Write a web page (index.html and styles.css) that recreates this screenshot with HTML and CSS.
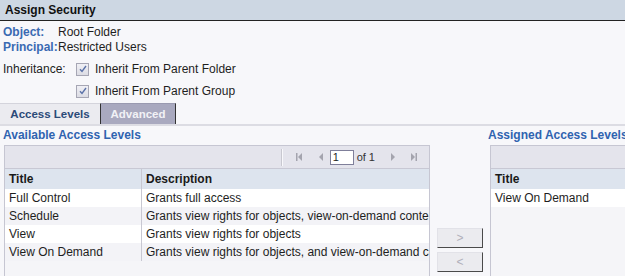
FILE: index.html
```html
<!DOCTYPE html>
<html lang="en">
<head>
<meta charset="UTF-8">
<title>Assign Security</title>
<link rel="stylesheet" href="styles.css">
</head>
<body>
  <div class="title-bar">Assign Security</div>

  <div class="info">
    <div class="info-row"><span class="label">Object:</span><span>Root Folder</span></div>
    <div class="info-row"><span class="label">Principal:</span><span>Restricted Users</span></div>
    <div class="check-row first">
      <span class="inherit">Inheritance:</span>
      <span class="check"><svg width="10" height="10" viewBox="0 0 10 10"><path d="M2 5.2 L4 7.5 L8 2" fill="none" stroke="#5b72a8" stroke-width="1.4"/></svg></span>
      <span>Inherit From Parent Folder</span>
    </div>
    <div class="check-row">
      <span class="inherit"></span>
      <span class="check"><svg width="10" height="10" viewBox="0 0 10 10"><path d="M2 5.2 L4 7.5 L8 2" fill="none" stroke="#5b72a8" stroke-width="1.4"/></svg></span>
      <span>Inherit From Parent Group</span>
    </div>
  </div>

  <div class="tabs">
    <div class="tab active">Access Levels</div>
    <div class="tab">Advanced</div>
  </div>

  <div class="panels">
    <div class="panel-left">
      <div class="panel-title">Available Access Levels</div>
      <div class="grid">
        <div class="toolbar">
          <span class="sep"></span>
          <svg class="pg" width="8" height="10" viewBox="0 0 8 10"><rect x="1" y="1" width="1.5" height="8" fill="#a4a4ae"/><path d="M7 1 L3 5 L7 9 Z" fill="#a4a4ae"/></svg>
          <svg class="pg prev" width="6" height="10" viewBox="0 0 6 10"><path d="M5 1 L1 5 L5 9 Z" fill="#a4a4ae"/></svg>
          <span class="page-box">1</span>
          <span class="of">of 1</span>
          <svg class="pg next" width="6" height="10" viewBox="0 0 6 10"><path d="M1 1 L5 5 L1 9 Z" fill="#a4a4ae"/></svg>
          <svg class="pg last" width="8" height="10" viewBox="0 0 8 10"><path d="M1 1 L5 5 L1 9 Z" fill="#a4a4ae"/><rect x="5.5" y="1" width="1.5" height="8" fill="#a4a4ae"/></svg>
        </div>
        <table class="levels">
          <tr><th class="col-title">Title</th><th>Description</th></tr>
          <tr><td class="col-title">Full Control</td><td>Grants full access</td></tr>
          <tr class="alt"><td class="col-title">Schedule</td><td>Grants view rights for objects, view-on-demand content</td></tr>
          <tr><td class="col-title">View</td><td>Grants view rights for objects</td></tr>
          <tr class="alt"><td class="col-title">View On Demand</td><td>Grants view rights for objects, and view-on-demand content</td></tr>
        </table>
      </div>
    </div>

    <div class="mover">
      <button class="move">&gt;</button>
      <button class="move">&lt;</button>
    </div>

    <div class="panel-right">
      <div class="panel-title">Assigned Access Levels</div>
      <div class="grid grid-right">
        <div class="toolbar"></div>
        <table class="levels">
          <tr><th>Title</th></tr>
          <tr><td>View On Demand</td></tr>
        </table>
      </div>
    </div>
  </div>
</body>
</html>
```

FILE: styles.css
```css
body {
  font-family: "Liberation Sans", Arial, sans-serif;
  font-size: 12px;
  color: #1e1e1e;
  background-color: #f7f7fa;
  margin: 0;
  width: 625px;
  height: 276px;
  overflow: hidden;
}
.title-bar {
  height: 20px;
  line-height: 21px;
  background-color: #cdd7e3;
  border-bottom: 1px solid #222222;
  padding-left: 5px;
  font-weight: bold;
  color: #111111;
}
.info {
  padding: 4px 0 0 3px;
}
.info-row {
  display: flex;
  height: 15px;
  line-height: 15px;
}
.label {
  flex-shrink: 0;
  width: 54px;
  margin-right: 1px;
  font-weight: bold;
  color: #3a6ab2;
}
.check-row {
  display: flex;
  align-items: center;
  height: 22px;
}
.check-row.first {
  margin-top: 3px;
}
.inherit {
  width: 73px;
}
.check {
  width: 11px;
  height: 11px;
  border: 1px solid #a6a6b4;
  background: linear-gradient(#f0f0f5, #dcdce4);
  display: flex;
  align-items: center;
  justify-content: center;
  margin-right: 6px;
}
.tabs {
  display: flex;
  margin-top: 1px;
  height: 21px;
  border-bottom: 2px solid #dcdce3;
}
.tab {
  height: 20px;
  line-height: 21px;
  font-weight: bold;
  font-size: 11.5px;
  text-align: center;
  border-top: 1px solid #d4d4dc;
  border-right: 1px solid #333333;
}
.tab.active {
  width: 100px;
  background-color: #ebebf0;
  color: #2b4a78;
}
.tab:not(.active) {
  width: 74px;
  background-color: #a9a9bf;
  color: #f2f2f6;
  border-top-color: #9a9ab0;
}
.panels {
  display: flex;
  padding-left: 3px;
}
.panel-title {
  height: 18px;
  line-height: 19px;
  font-weight: bold;
  color: #2f63b0;
  white-space: nowrap;
}
.panel-left {
  width: 427px;
}
.grid {
  margin-left: 1px;
  margin-top: 1px;
  border: 1px solid #c6c6d2;
  border-bottom: none;
  height: 131px;
  background-color: #f5f5f8;
}
.toolbar {
  height: 22px;
  background-color: #e4e4ec;
  border-bottom: 1px solid #c8c8d4;
  display: flex;
  align-items: center;
  justify-content: flex-end;
  padding-right: 11px;
}
.sep {
  width: 1px;
  height: 17px;
  background-color: #c8c8d0;
  border-right: 1px solid #f8f8fb;
  margin-right: 12px;
}
.pg.prev {
  margin-left: 15px;
}
.page-box {
  width: 20px;
  height: 13px;
  line-height: 13px;
  margin-left: 6px;
  padding-left: 2px;
  border: 1px solid #7f7f9a;
  background-color: #ffffff;
  font-size: 11px;
}
.of {
  margin-left: 3px;
  font-size: 11px;
  color: #333333;
}
.pg.next {
  margin-left: 15px;
}
.pg.last {
  margin-left: 14px;
}
.levels {
  border-collapse: collapse;
  width: 100%;
  table-layout: fixed;
}
.levels th {
  height: 20px;
  background-color: #dde4ee;
  text-align: left;
  padding: 0 0 0 4px;
  font-weight: bold;
  color: #1a1a1a;
}
.levels td {
  height: 18px;
  padding: 0 0 0 4px;
  background-color: #ffffff;
  white-space: nowrap;
  overflow: hidden;
}
.levels tr.alt td {
  background-color: #f3f3f7;
}
.col-title {
  width: 132px;
  border-right: 1px solid #c8c8d2;
}
.mover {
  width: 51px;
  padding: 102px 0 0 7px;
  display: flex;
  flex-direction: column;
  gap: 4px;
}
.move {
  width: 46px;
  height: 20px;
  background-color: #ebebef;
  color: #b0b0ba;
  font-family: "Liberation Sans", Arial, sans-serif;
  font-size: 12px;
  border: 1px solid #e2e2e8;
  border-right-color: #4a4a4a;
  border-bottom-color: #4a4a4a;
  padding: 0;
}
.panel-right {
  flex: 1;
  min-width: 0;
  overflow: hidden;
}
.grid-right {
  margin-left: 2px;
  width: 200px;
}
```
